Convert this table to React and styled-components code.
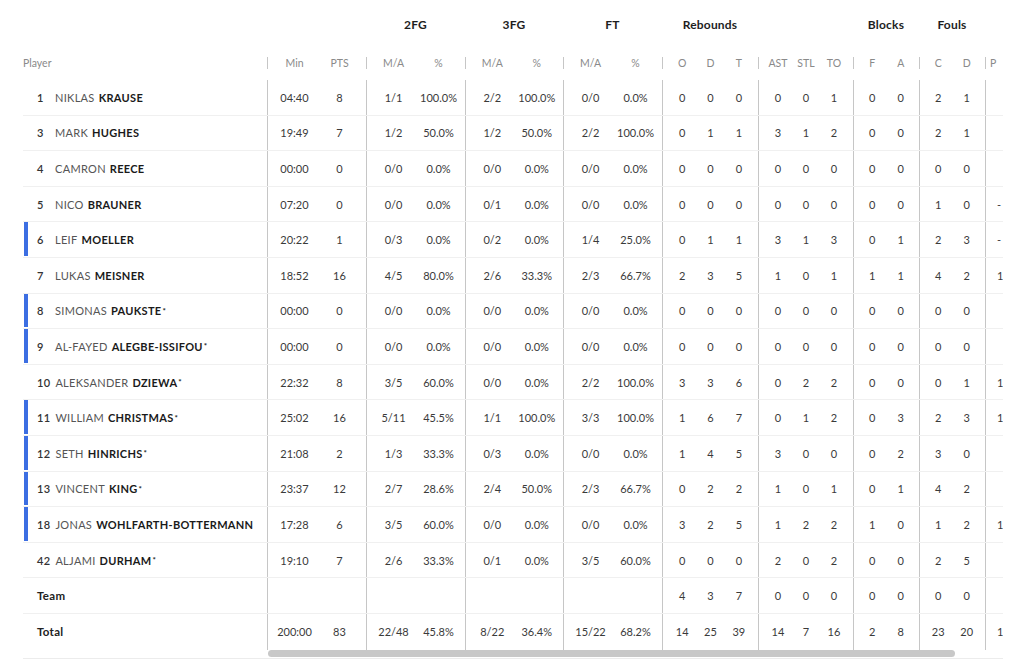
import styled, { createGlobalStyle } from "styled-components";

const GlobalStyle = createGlobalStyle`
  * { box-sizing: border-box; }
  body {
    margin: 0;
    background: #fff;
    font-family: Lato, "Liberation Sans", sans-serif;
    color: #333;
  }
`;

const groups = [
    { label: "", cols: ["Min", "PTS"], w: 99, pad: 4 },
    { label: "2FG", cols: ["M/A", "%"], w: 99, pad: 4 },
    { label: "3FG", cols: ["M/A", "%"], w: 98, pad: 4 },
    { label: "FT", cols: ["M/A", "%"], w: 99, pad: 4 },
    { label: "Rebounds", cols: ["O", "D", "T"], w: 96, pad: 5 },
    { label: "", cols: ["AST", "STL", "TO"], w: 95, pad: 5 },
    { label: "Blocks", cols: ["F", "A"], w: 66, pad: 4 },
    { label: "Fouls", cols: ["C", "D"], w: 66, pad: 4 },
    { label: "", cols: ["P"], w: 70, pad: 0, start: true }
];

const players = [
    { no: "1", first: "NIKLAS", last: "KRAUSE", stats: ["04:40", "8", "1/1", "100.0%", "2/2", "100.0%", "0/0", "0.0%", "0", "0", "0", "0", "0", "1", "0", "0", "2", "1", ""] },
    { no: "3", first: "MARK", last: "HUGHES", stats: ["19:49", "7", "1/2", "50.0%", "1/2", "50.0%", "2/2", "100.0%", "0", "1", "1", "3", "1", "2", "0", "0", "2", "1", ""] },
    { no: "4", first: "CAMRON", last: "REECE", stats: ["00:00", "0", "0/0", "0.0%", "0/0", "0.0%", "0/0", "0.0%", "0", "0", "0", "0", "0", "0", "0", "0", "0", "0", ""] },
    { no: "5", first: "NICO", last: "BRAUNER", stats: ["07:20", "0", "0/0", "0.0%", "0/1", "0.0%", "0/0", "0.0%", "0", "0", "0", "0", "0", "0", "0", "0", "1", "0", "-"] },
    { no: "6", first: "LEIF", last: "MOELLER", starter: true, stats: ["20:22", "1", "0/3", "0.0%", "0/2", "0.0%", "1/4", "25.0%", "0", "1", "1", "3", "1", "3", "0", "1", "2", "3", "-"] },
    { no: "7", first: "LUKAS", last: "MEISNER", stats: ["18:52", "16", "4/5", "80.0%", "2/6", "33.3%", "2/3", "66.7%", "2", "3", "5", "1", "0", "1", "1", "1", "4", "2", "1"] },
    { no: "8", first: "SIMONAS", last: "PAUKSTE", star: true, starter: true, stats: ["00:00", "0", "0/0", "0.0%", "0/0", "0.0%", "0/0", "0.0%", "0", "0", "0", "0", "0", "0", "0", "0", "0", "0", ""] },
    { no: "9", first: "AL-FAYED", last: "ALEGBE-ISSIFOU", star: true, starter: true, stats: ["00:00", "0", "0/0", "0.0%", "0/0", "0.0%", "0/0", "0.0%", "0", "0", "0", "0", "0", "0", "0", "0", "0", "0", ""] },
    { no: "10", first: "ALEKSANDER", last: "DZIEWA", star: true, stats: ["22:32", "8", "3/5", "60.0%", "0/0", "0.0%", "2/2", "100.0%", "3", "3", "6", "0", "2", "2", "0", "0", "0", "1", "1"] },
    { no: "11", first: "WILLIAM", last: "CHRISTMAS", star: true, starter: true, stats: ["25:02", "16", "5/11", "45.5%", "1/1", "100.0%", "3/3", "100.0%", "1", "6", "7", "0", "1", "2", "0", "3", "2", "3", "1"] },
    { no: "12", first: "SETH", last: "HINRICHS", star: true, starter: true, stats: ["21:08", "2", "1/3", "33.3%", "0/3", "0.0%", "0/0", "0.0%", "1", "4", "5", "3", "0", "0", "0", "2", "3", "0", ""] },
    { no: "13", first: "VINCENT", last: "KING", star: true, starter: true, stats: ["23:37", "12", "2/7", "28.6%", "2/4", "50.0%", "2/3", "66.7%", "0", "2", "2", "1", "0", "1", "0", "1", "4", "2", ""] },
    { no: "18", first: "JONAS", last: "WOHLFARTH-BOTTERMANN", starter: true, stats: ["17:28", "6", "3/5", "60.0%", "0/0", "0.0%", "0/0", "0.0%", "3", "2", "5", "1", "2", "2", "1", "0", "1", "2", "1"] },
    { no: "42", first: "ALJAMI", last: "DURHAM", star: true, stats: ["19:10", "7", "2/6", "33.3%", "0/1", "0.0%", "3/5", "60.0%", "0", "0", "0", "2", "0", "2", "0", "0", "2", "5", ""] }
];

const teamRow = ["", "", "", "", "", "", "", "", "4", "3", "7", "0", "0", "0", "0", "0", "0", "0", ""];
const totalRow = ["200:00", "83", "22/48", "45.8%", "8/22", "36.4%", "15/22", "68.2%", "14", "25", "39", "14", "7", "16", "2", "8", "23", "20", "1"];

const ROW_H = "35.6px";

const Page = styled.div`
    padding: 0 21px 0 23px;
`;

const Board = styled.div`
    display: flex;
    border-bottom: 1px solid #ececec;
`;

const PlayerCol = styled.div`
    width: 244px;
    flex-shrink: 0;
    padding-bottom: 8px;
`;

const StatsCol = styled.div`
    flex: 1;
    min-width: 0;
    display: flex;
    flex-direction: column;
`;

const Scroller = styled.div`
    overflow: hidden;
`;

const Track = styled.div`
    height: 8px;
    padding: 0 0 1px 1px;
`;

const Thumb = styled.div`
    width: 687px;
    height: 7px;
    border-radius: 4px;
    background: #c8c8c8;
`;

const Sheet = styled.div`
    width: 788px;
`;

const HeadSpacer = styled.div`
    height: 45px;
`;

const HeadRow = styled.div`
    display: flex;
    height: 45px;
    padding-top: 3px;
`;

const GroupTitle = styled.div`
    width: ${(p) => p.$w}px;
    flex-shrink: 0;
    display: flex;
    align-items: center;
    justify-content: center;
    font-size: 12px;
    font-weight: 700;
    color: #1e1e1e;
    letter-spacing: 0.2px;
`;

const SubHead = styled.div`
    display: flex;
    align-items: center;
    height: 35px;
    font-size: 10.5px;
    color: #8a8a8a;
`;

const Row = styled.div`
    display: flex;
    align-items: stretch;
    height: ${ROW_H};
    border-bottom: ${(p) => (p.$last ? "none" : "1px solid #f0f0f0")};
`;

const Group = styled.div`
    width: ${(p) => p.$w}px;
    flex-shrink: 0;
    display: flex;
    padding: 0 ${(p) => p.$pad}px;
    border-left: 1px solid #c6c6c6;
`;

const Cell = styled.div`
    flex: 1;
    display: flex;
    align-items: center;
    justify-content: center;
    font-size: ${(p) => (p.$head ? "10.5px" : "11px")};
    color: ${(p) => (p.$head ? "#8a8a8a" : "#3a3a3a")};
    white-space: nowrap;
`;

const EdgeCell = styled(Cell)`
    justify-content: flex-start;
    padding-left: ${(p) => (p.$head ? "4px" : "11px")};
`;

const PlayerRow = styled.div`
    position: relative;
    display: flex;
    align-items: center;
    height: ${ROW_H};
    padding-left: 14px;
    border-bottom: ${(p) => (p.$last ? "none" : "1px solid #f0f0f0")};
    font-size: 11px;
    letter-spacing: 0.3px;
    white-space: nowrap;

    &::before {
        content: "";
        display: ${(p) => (p.$starter ? "block" : "none")};
        position: absolute;
        left: 1px;
        top: 0;
        bottom: 1px;
        width: 4px;
        background: #3c6ee2;
    }
`;

const Num = styled.span`
    min-width: 13px;
    margin-right: 5px;
    color: #333;
    font-weight: 600;
`;

const First = styled.span`
    color: #555;
    margin-right: 4px;
`;

const Last = styled.span`
    color: #1a1a1a;
    font-weight: 700;
`;

const Star = styled.sup`
    font-size: 8px;
    font-weight: 700;
    margin-left: 1px;
    color: #1a1a1a;
`;

const Label = styled.span`
    font-weight: 700;
    color: #222;
    font-size: 11.5px;
`;

const StatRow = ({ values, head, last }) => {
    let i = 0;
    const R = head ? SubHead : Row;
    return (
        <R $last={last}>
            {groups.map((g, gi) => (
                <Group key={gi} $w={g.w} $pad={g.pad}>
                    {g.cols.map((c, ci) => {
                        const v = head ? c : values[i];
                        i += 1;
                        const C = g.start ? EdgeCell : Cell;
                        return (
                            <C key={ci} $head={head}>
                                {v}
                            </C>
                        );
                    })}
                </Group>
            ))}
        </R>
    );
};

const App = () => {
    return (
        <Page>
            <GlobalStyle />
            <Board>
                <PlayerCol>
                    <HeadSpacer />
                    <SubHead>Player</SubHead>
                    {players.map((p) => (
                        <PlayerRow key={p.no} $starter={p.starter}>
                            <Num>{p.no}</Num>
                            <First>{p.first}</First>
                            <Last>{p.last}</Last>
                            {p.star && <Star>*</Star>}
                        </PlayerRow>
                    ))}
                    <PlayerRow>
                        <Label>Team</Label>
                    </PlayerRow>
                    <PlayerRow $last>
                        <Label>Total</Label>
                    </PlayerRow>
                </PlayerCol>
                <StatsCol>
                    <Scroller>
                        <Sheet>
                            <HeadRow>
                                {groups.map((g, gi) => (
                                    <GroupTitle key={gi} $w={g.w}>
                                        {g.label}
                                    </GroupTitle>
                                ))}
                            </HeadRow>
                            <StatRow head />
                            {players.map((p) => (
                                <StatRow key={p.no} values={p.stats} />
                            ))}
                            <StatRow values={teamRow} />
                            <StatRow values={totalRow} last />
                        </Sheet>
                    </Scroller>
                    <Track>
                        <Thumb />
                    </Track>
                </StatsCol>
            </Board>
        </Page>
    );
};

export default App;
